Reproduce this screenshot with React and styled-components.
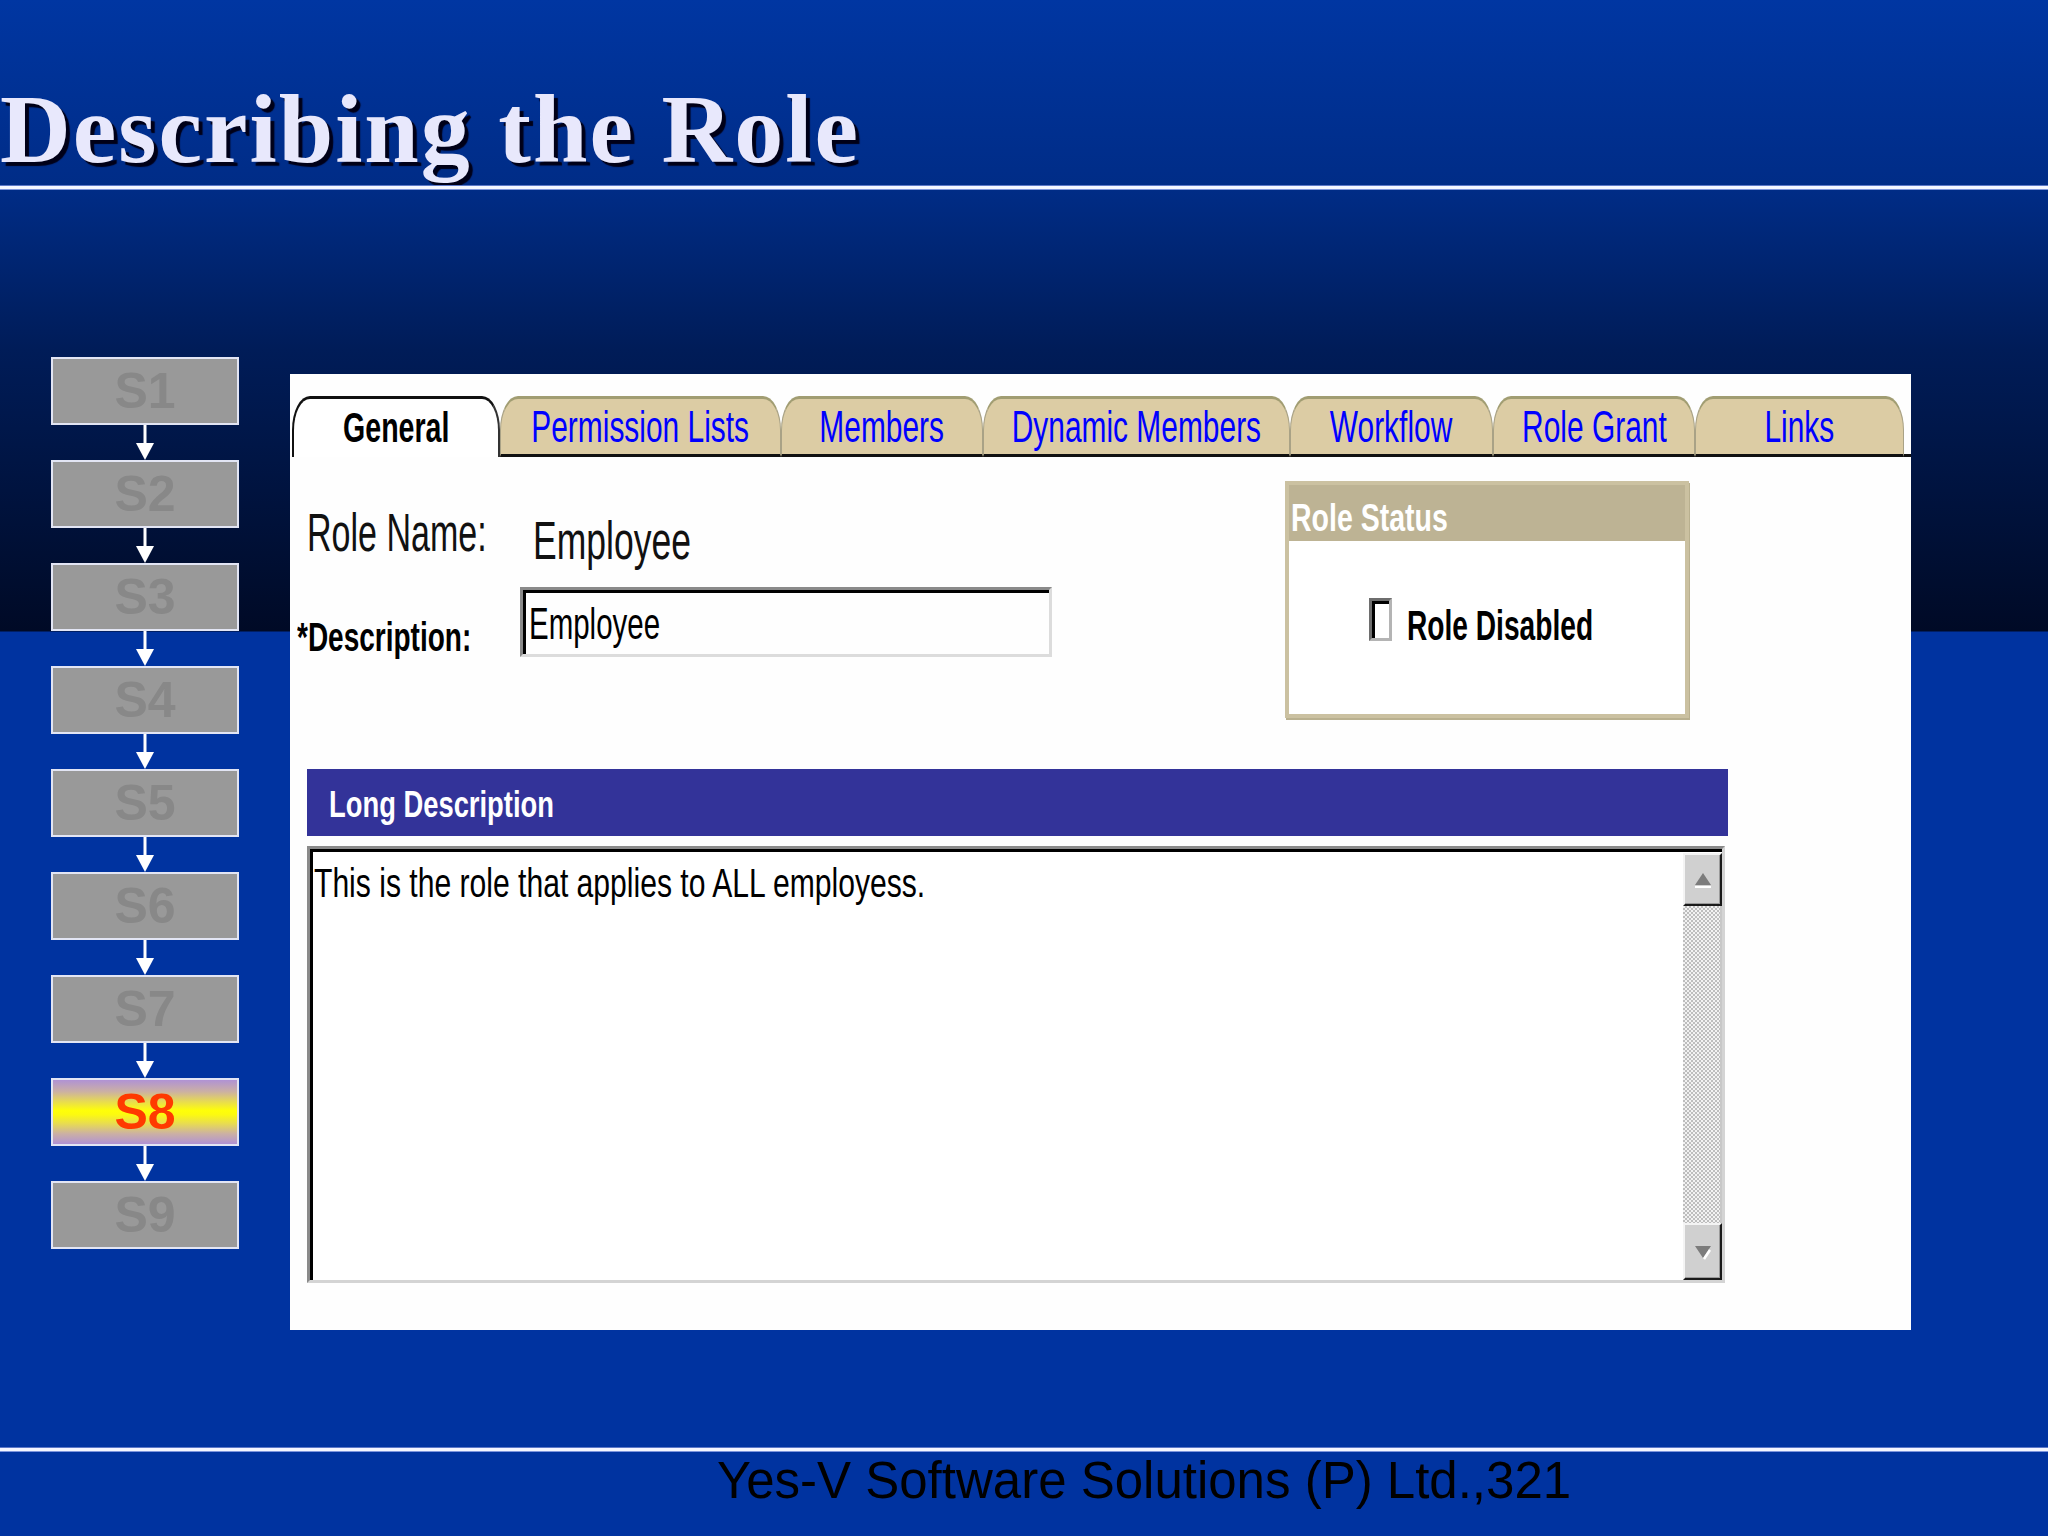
import React from 'react';
import styled, { createGlobalStyle } from 'styled-components';

const GlobalStyle = createGlobalStyle`
  html, body {
    margin: 0;
    padding: 0;
  }
  body {
    width: 2048px;
    height: 1536px;
    overflow: hidden;
    font-family: "Liberation Sans", Arial, sans-serif;
  }
`;

const steps = ['S1', 'S2', 'S3', 'S4', 'S5', 'S6', 'S7', 'S8', 'S9'];

const tabs = [
  { label: 'General', w: 208, active: true },
  { label: 'Permission Lists', w: 281 },
  { label: 'Members', w: 202 },
  { label: 'Dynamic Members', w: 307 },
  { label: 'Workflow', w: 203 },
  { label: 'Role Grant', w: 202 },
  { label: 'Links', w: 209 },
];

function App() {
  return (
    <>
      <GlobalStyle />
      <Slide>
        <Header>
          <Title>Describing the Role</Title>
        </Header>
        <Rule />
        <Body>
          <Steps>
            {steps.map((s, i) => (
              <React.Fragment key={s}>
                <StepBox $active={s === 'S8'}>{s}</StepBox>
                {i < steps.length - 1 && (
                  <Connector width="20" height="35" viewBox="0 0 20 35">
                    <line x1="10" y1="0" x2="10" y2="19" stroke="#fff" strokeWidth="3" />
                    <polygon points="1,18 19,18 10,35" fill="#fff" />
                  </Connector>
                )}
              </React.Fragment>
            ))}
          </Steps>

          <Panel>
            <TabRow>
              {tabs.map((t) => (
                <Tab key={t.label} $w={t.w} $active={t.active}>
                  <Squeeze $x={0.68} $o="center">{t.label}</Squeeze>
                </Tab>
              ))}
              <TabFiller />
            </TabRow>

            <TopArea>
              <Form>
                <FormRow $h={130}>
                  <NameLabel>
                    <Squeeze $x={0.63}>Role Name:</Squeeze>
                  </NameLabel>
                  <NameValue>
                    <Squeeze $x={0.67}>Employee</Squeeze>
                  </NameValue>
                </FormRow>
                <FormRow $h={70}>
                  <DescLabel>
                    <Squeeze $x={0.7}>*Description:</Squeeze>
                  </DescLabel>
                  <TextInput>
                    <Squeeze $x={0.67}>Employee</Squeeze>
                  </TextInput>
                </FormRow>
              </Form>

              <StatusBox>
                <StatusHead>
                  <Squeeze $x={0.75}>Role Status</Squeeze>
                </StatusHead>
                <StatusBody>
                  <CheckBox />
                  <CheckLabel>
                    <Squeeze $x={0.67}>Role Disabled</Squeeze>
                  </CheckLabel>
                </StatusBody>
              </StatusBox>
            </TopArea>

            <SectionBar>
              <Squeeze $x={0.76}>Long Description</Squeeze>
            </SectionBar>

            <TextArea>
              <AreaText>
                <Squeeze $x={0.734}>This is the role that applies to ALL employess.</Squeeze>
              </AreaText>
              <ScrollBar>
                <ScrollButton $h={53}>
                  <svg width="22" height="20" viewBox="0 0 22 20">
                    <polygon points="11,3 19,15 3,15" fill="#7c7c7c" />
                    <rect x="3" y="16" width="16" height="2" fill="#fff" />
                  </svg>
                </ScrollButton>
                <ScrollTrack />
                <ScrollButton $h={57}>
                  <svg width="22" height="20" viewBox="0 0 22 20">
                    <polygon points="3,4 19,4 11,16" fill="#7c7c7c" />
                    <line x1="12" y1="17" x2="18" y2="8" stroke="#fff" strokeWidth="2.5" />
                  </svg>
                </ScrollButton>
              </ScrollBar>
            </TextArea>
          </Panel>
        </Body>
        <Rule />
        <Footer>Yes-V Software Solutions (P) Ltd.,321</Footer>
      </Slide>
    </>
  );
}

export default App;

const Slide = styled.div`
  width: 2048px;
  height: 1536px;
  display: flex;
  flex-direction: column;
  overflow: hidden;
  background: linear-gradient(
    180deg,
    #0036a2 0px,
    #002c86 190px,
    #001c58 350px,
    #000a26 631px,
    #0033a0 632px,
    #0033a0 100%
  );
`;

const Header = styled.div`
  height: 186px;
  box-sizing: border-box;
  padding-top: 80px;
`;

const Title = styled.h1`
  margin: 0;
  font-family: "Liberation Serif", "Times New Roman", serif;
  font-weight: bold;
  font-size: 98px;
  letter-spacing: 2px;
  line-height: 1;
  color: #e8e8fc;
  text-shadow: 4px 4px 1px #000018;
  white-space: nowrap;
`;

const Rule = styled.div`
  height: 3px;
  background: #f4f6ff;
  box-shadow: 0 1px 0 #7d95dc, 0 -1px 0 #5c78c8;
`;

const Body = styled.div`
  height: 1259px;
  display: flex;
  align-items: flex-start;
  gap: 51px;
  padding-left: 51px;
`;

const Steps = styled.div`
  margin-top: 168px;
  width: 188px;
  display: flex;
  flex-direction: column;
  align-items: center;
`;

const StepBox = styled.div`
  width: 188px;
  height: 68px;
  box-sizing: border-box;
  border: 2px solid #e2e5f4;
  display: flex;
  align-items: center;
  justify-content: center;
  font-family: "Liberation Sans", Arial, sans-serif;
  font-weight: bold;
  font-size: 50px;
  color: ${(p) => (p.$active ? '#ff3a00' : '#888888')};
  background: ${(p) =>
    p.$active
      ? 'linear-gradient(180deg, #b092d4 0%, #cbb0a4 18%, #e8dc50 34%, #ffff08 48%, #fcfa10 54%, #e8dc50 68%, #cbb0a4 84%, #b092d4 100%)'
      : '#999999'};
`;

const Connector = styled.svg`
  display: block;
`;

const Panel = styled.div`
  margin-top: 185px;
  width: 1621px;
  height: 956px;
  box-sizing: border-box;
  padding-top: 22px;
  background: #fefefe;
  display: flex;
  flex-direction: column;
`;

const TabRow = styled.div`
  height: 61px;
  margin-left: 2px;
  display: flex;
  align-items: stretch;
`;

const Tab = styled.div`
  width: ${(p) => p.$w}px;
  box-sizing: border-box;
  display: flex;
  align-items: center;
  justify-content: center;
  font-family: "Liberation Sans", Arial, sans-serif;
  font-size: ${(p) => (p.$active ? 42 : 44)}px;
  font-weight: ${(p) => (p.$active ? 'bold' : 'normal')};
  line-height: 1;
  color: ${(p) => (p.$active ? '#000' : '#0000ff')};
  border-radius: 18px 18px 0 0 / 34px 34px 0 0;
  ${(p) =>
    p.$active
      ? `
    background: #fff;
    border-top: 3px solid #111;
    border-left: 2px solid #111;
    border-right: 2px solid #333;
  `
      : `
    background: #dccca4;
    border-top: 3px solid #a19d72;
    border-left: 1px solid #a9a286;
    border-right: 1px solid #a9a286;
    border-bottom: 3px solid #111;
  `}
`;

const TabFiller = styled.div`
  flex: 1;
  border-bottom: 3px solid #111;
`;

const Squeeze = styled.span`
  display: inline-block;
  white-space: nowrap;
  transform: scaleX(${(p) => p.$x});
  transform-origin: ${(p) => p.$o || 'left'} center;
`;

const TopArea = styled.div`
  height: 261px;
  display: flex;
  align-items: flex-start;
`;

const Form = styled.div`
  width: 755px;
  margin-left: 7px;
  display: flex;
  flex-direction: column;
`;

const FormRow = styled.div`
  height: ${(p) => p.$h}px;
  display: grid;
  grid-template-columns: 223px 532px;
  align-items: start;
`;

const NameLabel = styled.div`
  margin-top: 48px;
  padding-left: 10px;
  font-size: 54px;
  line-height: 1;
  color: #111;
`;

const NameValue = styled.div`
  margin-top: 57px;
  padding-left: 13px;
  font-size: 53px;
  line-height: 1;
  color: #111;
`;

const DescLabel = styled.div`
  margin-top: 30px;
  font-size: 40px;
  font-weight: bold;
  line-height: 1;
  color: #000;
`;

const TextInput = styled.div`
  height: 70px;
  box-sizing: border-box;
  border: 3px solid;
  border-color: #8a8a8a #dcdcdc #dcdcdc #8a8a8a;
  box-shadow: inset 3px 3px 0 #000;
  padding: 4px 0 0 6px;
  display: flex;
  align-items: center;
  font-size: 44px;
  line-height: 1;
  color: #000;
`;

const StatusBox = styled.div`
  margin-left: 233px;
  margin-top: 24px;
  width: 404px;
  height: 237px;
  box-sizing: border-box;
  border: 4px solid #cbc1a1;
  box-shadow: 1px 2px 0 #b9b08f;
  display: flex;
  flex-direction: column;
  background: #fff;
`;

const StatusHead = styled.div`
  height: 56px;
  box-sizing: border-box;
  padding: 14px 0 0 2px;
  background: #bdb394;
  color: #fff;
  font-size: 38px;
  font-weight: bold;
  line-height: 1;
`;

const StatusBody = styled.div`
  flex: 1;
  padding: 57px 0 0 80px;
  display: flex;
  align-items: flex-start;
`;

const CheckBox = styled.div`
  width: 32px;
  height: 43px;
  box-sizing: border-box;
  border: 3px solid;
  border-color: #6e6e6e #b4b4b4 #b4b4b4 #6e6e6e;
  box-shadow: inset 3px 3px 0 #000;
  background: #fff;
`;

const CheckLabel = styled.div`
  margin: 7px 0 0 15px;
  font-size: 42px;
  font-weight: bold;
  line-height: 1;
  color: #000;
`;

const SectionBar = styled.div`
  margin: 51px 0 0 17px;
  width: 1421px;
  height: 67px;
  box-sizing: border-box;
  padding: 18px 0 0 22px;
  background: #333399;
  color: #fff;
  font-size: 36px;
  font-weight: bold;
  line-height: 1;
`;

const TextArea = styled.div`
  margin: 10px 0 0 17px;
  width: 1418px;
  height: 437px;
  box-sizing: border-box;
  border: 3px solid;
  border-color: #8a8a8a #d4d4d4 #d4d4d4 #8a8a8a;
  box-shadow: inset 3px 3px 0 #000;
  display: flex;
  background: #fff;
`;

const AreaText = styled.div`
  flex: 1;
  padding: 14px 0 0 4px;
  font-size: 41px;
  line-height: 1;
  color: #000;
`;

const ScrollBar = styled.div`
  width: 39px;
  margin-top: 4px;
  display: flex;
  flex-direction: column;
`;

const ScrollButton = styled.div`
  height: ${(p) => p.$h}px;
  box-sizing: border-box;
  background: #d0d0d0;
  border: 2px solid;
  border-color: #f4f4f4 #1a1a1a #1a1a1a #f4f4f4;
  box-shadow: inset -1px -1px 0 #9a9a9a;
  display: flex;
  align-items: center;
  justify-content: center;
`;

const ScrollTrack = styled.div`
  flex: 1;
  background: repeating-conic-gradient(#bdbdbd 0 25%, #f2f2f2 0 50%) 0 0 / 4px 4px;
  border-right: 2px solid #c8c8c8;
`;

const Footer = styled.div`
  flex: 1;
  padding: 4px 0 0 240px;
  text-align: center;
  font-family: "Liberation Sans", Arial, sans-serif;
  font-size: 51px;
  line-height: 1;
  color: #000;
`;
